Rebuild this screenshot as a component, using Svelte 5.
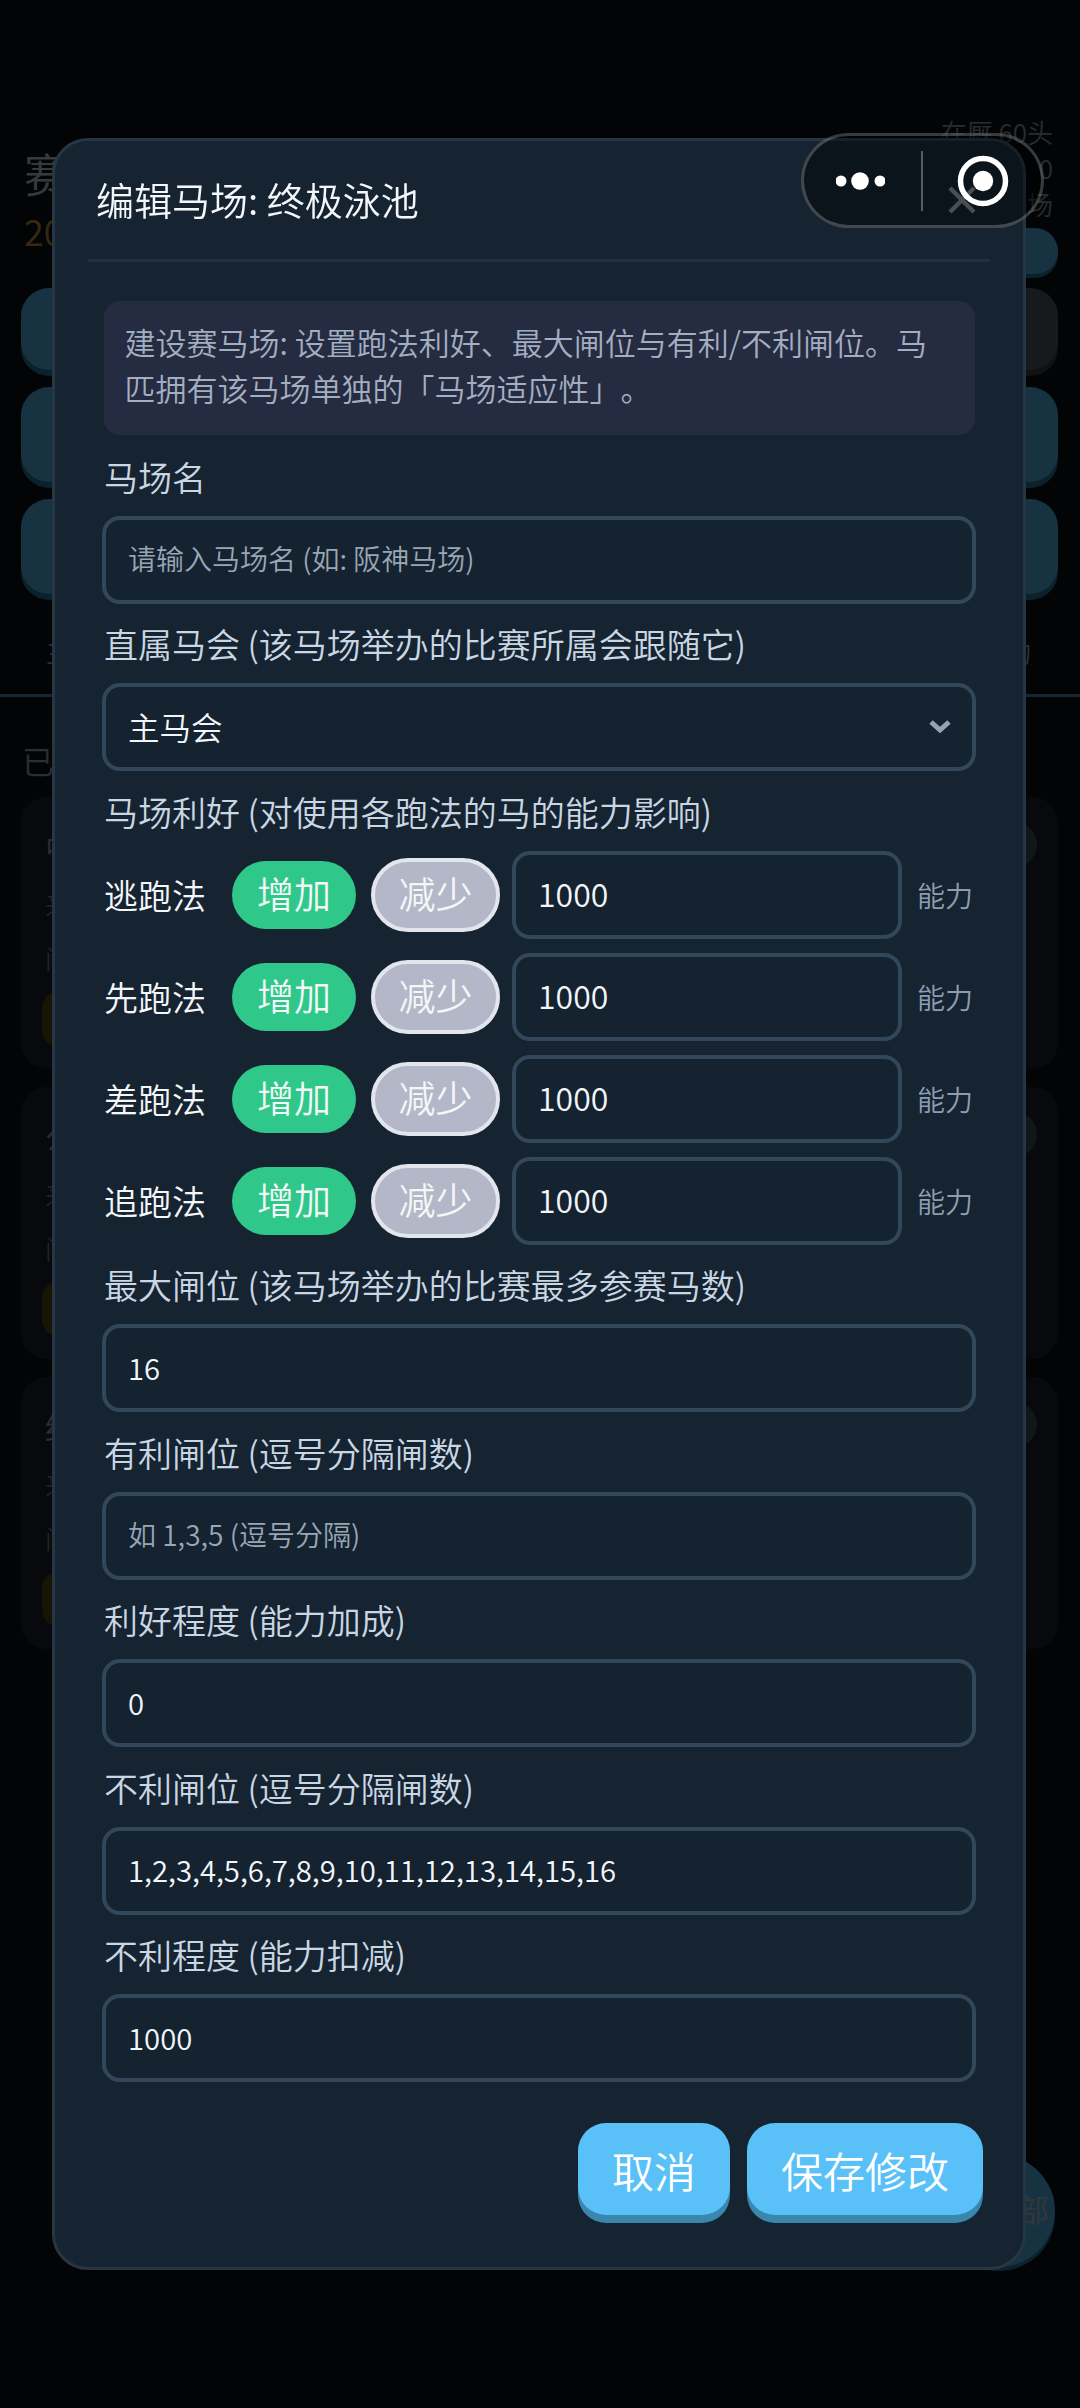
<script>
  const styles = ['逃跑法', '先跑法', '差跑法', '追跑法'];
  const lower = [
    { label: '最大闸位 (该马场举办的比赛最多参赛马数)', value: '16' },
    { label: '有利闸位 (逗号分隔闸数)', hint: '如 1,3,5 (逗号分隔)' },
    { label: '利好程度 (能力加成)', value: '0' },
    { label: '不利闸位 (逗号分隔闸数)', value: '1,2,3,4,5,6,7,8,9,10,11,12,13,14,15,16' },
    { label: '不利程度 (能力扣减)', value: '1000' }
  ];
  const cards = ['中', '公', '终'];
</script>

<div class="page">
  <header class="top">
    <div class="tleft">
      <div class="h1">赛</div>
      <div class="year">20</div>
    </div>
    <div class="stats">
      <div class="st">在厩 60头</div>
      <div class="st">0</div>
      <div class="st">场</div>
      <div class="mini"></div>
    </div>
  </header>
  <div class="menu"><div class="big"></div><div class="big gray"></div></div>
  <div class="menu m2"><div class="big tall"></div></div>
  <div class="menu m2"><div class="big tall"></div></div>
  <nav class="tabs"><span>主</span><span>动</span></nav>
  <div class="sec">已</div>
  {#each cards as c}
    <section class="card">
      <div class="cname">{c}</div>
      <div class="cline">来</div>
      <div class="cline">闸</div>
      <div class="tag"></div>
      <div class="badge"></div>
    </section>
  {/each}
  <div class="fab">部</div>
</div>

<div class="overlay"></div>

<div class="modal">
  <header class="mhead">
    <h2>编辑马场: 终极泳池</h2>
    <svg class="close" viewBox="0 0 28 28" width="28" height="28"><path d="M2 2 26 26M26 2 2 26" stroke="#7f8790" stroke-width="4.5" fill="none"/></svg>
  </header>
  <div class="mbody">
    <p class="note">建设赛马场: 设置跑法利好、最大闸位与有利/不利闸位。马匹拥有该马场单独的「马场适应性」。</p>

    <div class="field">
      <div class="label">马场名</div>
      <div class="input hint">请输入马场名 (如: 阪神马场)</div>
    </div>
    <div class="field">
      <div class="label">直属马会 (该马场举办的比赛所属会跟随它)</div>
      <div class="input select">主马会
        <svg viewBox="0 0 24 14" width="24" height="14"><path d="M3 3 12 11 21 3" stroke="#93a3b3" stroke-width="5" fill="none"/></svg>
      </div>
    </div>
    <div class="field rows">
      <div class="label">马场利好 (对使用各跑法的马的能力影响)</div>
      {#each styles as s}
        <div class="row">
          <span class="rname">{s}</span>
          <span class="pill on">增加</span>
          <span class="pill off">减少</span>
          <div class="input grow">1000</div>
          <span class="unit">能力</span>
        </div>
      {/each}
    </div>
    {#each lower as f}
      <div class="field">
        <div class="label">{f.label}</div>
        {#if f.hint}
          <div class="input hint">{f.hint}</div>
        {:else}
          <div class="input">{f.value}</div>
        {/if}
      </div>
    {/each}
    <footer class="actions">
      <button class="cancel">取消</button>
      <button class="save">保存修改</button>
    </footer>
  </div>
</div>

<div class="capsule">
  <svg class="dots" viewBox="0 0 49 18" width="49" height="18"><circle cx="5" cy="9" r="5.5" fill="#fff"/><circle cx="24" cy="9" r="8.8" fill="#fff"/><circle cx="44" cy="9" r="5.5" fill="#fff"/></svg>
  <span class="sep"></span>
  <svg class="target" viewBox="0 0 54 54" width="54" height="54"><circle cx="27" cy="27" r="22.5" fill="none" stroke="#fff" stroke-width="5.5"/><circle cx="27" cy="27" r="10.2" fill="#fff"/></svg>
</div>

<style>
  :global(body) {
    margin: 0;
    background: #0b1119;
    font-family: "Noto Sans CJK SC", "Noto Sans", sans-serif;
    font-weight: 350;
  }
  .page {
    height: 2408px;
    box-sizing: border-box;
    padding: 114px 22px 0 21px;
    overflow: hidden;
    color: #d5dde6;
    position: relative;
  }
  .top { display: flex; justify-content: space-between; height: 174px; }
  .tleft { padding-top: 28px; }
  .h1 { font-size: 46px; line-height: 60px; margin-left: 3px; }
  .year { font-size: 36px; line-height: 50px; margin: 3px 0 0 3px; color: #d89b3f; }
  .stats { font-size: 26px; line-height: 36px; text-align: right; color: #9da6b0; }
  .st { padding-right: 5px; }
  .mini { width: 100%; height: 46px; border-radius: 23px; background: #5ac1f8; margin-top: 6px; box-shadow: 0 4px 0 #2d7fa8; margin-right: 3px; }
  .menu { display: flex; gap: 10px; }
  .big { flex: 1; height: 82px; border-radius: 28px; background: #5ac1f8; box-shadow: 0 6px 0 #2d7fa8; }
  .big.gray { background: #5a6571; box-shadow: 0 6px 0 #3c444c; }
  .m2 { margin-top: 17px; }
  .tall { height: 95px; }
  .tabs { display: flex; justify-content: space-between; padding: 35px 49px 21px 46px; margin: 0 -22px 0 -21px; border-bottom: 3px solid #4d94b8; font-size: 28px; line-height: 44px; color: #a7b0bb; }
  .sec { font-size: 32px; line-height: 44px; margin: 41px 0 15px 1px; color: #a7b0bb; }
  .card { position: relative; height: 272px; margin-bottom: 18px; border-radius: 26px; background: #1e2630; padding: 27px 24px; box-sizing: border-box; color: #a7b0bb; }
  .cname { font-size: 32px; line-height: 44px; margin-bottom: 3px; }
  .cline { font-size: 26px; line-height: 36px; margin-top: 18px; color: #7d8590; }
  .tag { width: 60px; height: 54px; border-radius: 16px; background: #5a4f0c; margin: 16px 0 0 -3px; }
  .badge { position: absolute; right: 21px; top: 25px; width: 50px; height: 45px; border-radius: 23px; background: #4a5561; }
  .fab {
    position: absolute; right: 25px; top: 2155px; width: 112px; height: 112px; border-radius: 50%;
    background: #5ac1f8; box-shadow: 0 4px 0 #2d7fa8; color: #c8d4dc; font-size: 32px;
    display: flex; align-items: center; justify-content: flex-end; padding: 0 6px 6px 0; box-sizing: border-box;
  }
  .overlay { position: fixed; inset: 0; background: rgba(0, 0, 0, 0.74); }

  .modal {
    position: fixed; left: 52px; top: 138px; width: 974px; height: 2132px; box-sizing: border-box;
    background: #162330; border: 3px solid #263644; border-radius: 36px;
  }
  .mhead {
    position: relative; margin: 0 33px; height: 118px; border-bottom: 3px solid #1f3343;
  }
  h2 { margin: 0 0 0 8px; font-size: 38px; font-weight: 350; line-height: 116px; color: #f4f7fa; }
  .close { position: absolute; right: 14px; top: 45px; }
  .mbody { padding: 0 47px; }
  .note {
    margin: 39px 1.5px 21.5px; padding: 18px 21px; height: 134px; box-sizing: border-box;
    background: #252c42; border-radius: 16px; font-size: 31px; line-height: 46px; color: #a3aec0;
    text-spacing-trim: space-all;
  }
  .field { margin-bottom: 20.5px; }
  .label { font-size: 34px; line-height: 40px; margin-bottom: 19px; padding-left: 2px; color: #c9d6e3; white-space: nowrap; }
  .input {
    height: 88px; box-sizing: border-box; border: 4px solid #33475a; border-radius: 18px;
    padding: 0 22px 3px; font-size: 29.3px; display: flex; align-items: center; color: #f2f6fa; background: #152230;
  }
  .hint { color: #98a6b6; font-size: 28px; }
  .select { justify-content: space-between; font-size: 31.5px; padding-right: 20px; }
  .row { display: flex; align-items: center; height: 88px; margin-bottom: 14px; }
  .rows .row:last-child { margin-bottom: 0; }
  .rname { width: 128px; padding-left: 2px; font-size: 34px; color: #f4f7fa; white-space: nowrap; }
  .pill { display: flex; align-items: center; justify-content: center; box-sizing: border-box; border-radius: 40px; font-size: 37px; color: #f3f8f6; padding-bottom: 3px; }
  .on { width: 124px; height: 68px; background: #2fc88a; }
  .off { width: 129px; height: 74px; margin-left: 15px; background: #b3b7c8; border: 4px solid #e2e5ec; }
  .grow { flex: none; width: 390px; margin-left: 12px; font-size: 32px; }
  .unit { margin-left: 15px; font-size: 28px; color: #8d9db0; white-space: nowrap; }
  .actions { display: flex; justify-content: flex-end; gap: 17px; margin: 41px -7px 0 0; }
  button {
    height: 92px; border: 0; border-radius: 28px; background: #5ac1f8; color: #fff;
    font: 350 42px "Noto Sans CJK SC", sans-serif; box-shadow: 0 8px 0 #3a87ad; padding: 0;
  }
  .cancel { width: 152px; }
  .save { width: 236px; }

  .capsule {
    position: fixed; left: 801px; top: 133px; width: 243px; height: 95px; box-sizing: border-box;
    border: 3px solid rgba(255, 255, 255, 0.22); border-radius: 48px; background: rgba(0, 0, 0, 0.42);
    display: flex; align-items: center;
  }
  .dots { margin-left: 32px; }
  .sep { width: 2px; height: 60px; margin-left: 36px; background: rgba(255, 255, 255, 0.3); }
  .target { margin-left: 33px; }
</style>
